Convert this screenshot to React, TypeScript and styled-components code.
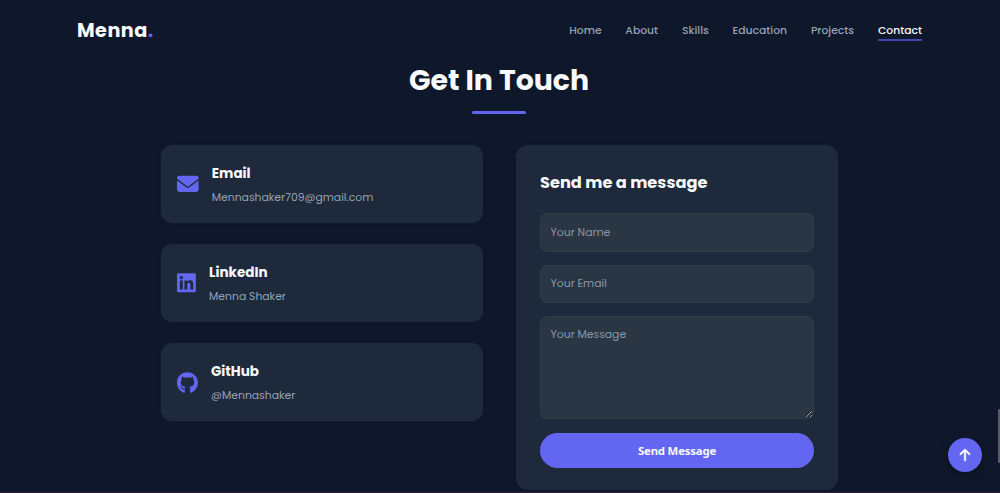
import React from "react";
import styled, { createGlobalStyle } from "styled-components";
import { FaArrowUp, FaEnvelope } from "react-icons/fa6";
import { FaGithub, FaLinkedin } from "react-icons/fa";

const GlobalStyle = createGlobalStyle`
  * { box-sizing: border-box; margin: 0; padding: 0; }
  body {
    background: #0f172a;
    color: #f8fafc;
    font-family: Poppins, Inter, "Liberation Sans", sans-serif;
    overflow: hidden;
  }
`;

const Page = styled.div`
  height: 493px;
  overflow: hidden;
  border-bottom: 1px solid #35202f;
`;

const Header = styled.header`
  display: flex;
  align-items: center;
  justify-content: space-between;
  height: 60px;
  padding: 0 78px 0 77px;
`;

const Logo = styled.span`
  padding-top: 1px;
  font-size: 19.2px;
  font-weight: 700;
  line-height: 28px;
  letter-spacing: 0.5px;
`;

const Dot = styled.span`
  color: #6366f1;
`;

const Nav = styled.nav`
  display: flex;
  gap: 23.8px;
`;

const NavLink = styled.a<{ $active?: boolean }>`
  height: 21px;
  margin-top: 1px;
  white-space: nowrap;
  font-size: 10.8px;
  font-weight: 500;
  line-height: 22px;
  color: ${({ $active }) => ($active ? "#f8fafc" : "#94a3b8")};
  border-bottom: 2px solid ${({ $active }) => ($active ? "#4644b0" : "transparent")};
`;

const Heading = styled.div`
  display: flex;
  flex-direction: column;
  align-items: center;
  height: 85px;
  padding-right: 2px;
`;

const Title = styled.h2`
  font-size: 28.35px;
  font-weight: 700;
  line-height: 40px;
`;

const Underline = styled.div`
  width: 54px;
  height: 3px;
  margin-top: 11px;
  border-radius: 2px;
  background: #6366f1;
`;

const Columns = styled.main`
  display: grid;
  grid-template-columns: 322px 322px;
  gap: 33.5px;
  padding-left: 160.5px;
  align-items: start;
`;

const Contacts = styled.div`
  display: flex;
  flex-direction: column;
  gap: 20.8px;
`;

const Card = styled.article<{ $iconWidth: number }>`
  display: flex;
  align-items: center;
  gap: 12.8px;
  height: 78.3px;
  padding: 0 16.9px;
  border-radius: 11px;
  background: #1e293b;
  box-shadow: 0 0 3px rgba(30, 41, 59, 0.35);
  svg {
    flex: none;
    height: 21.6px;
    width: ${({ $iconWidth }) => $iconWidth}px;
    color: #6366f1;
  }
`;

const CardTitle = styled.h3`
  padding-top: 4px;
  font-size: 13.5px;
  font-weight: 700;
  line-height: 22px;
`;

const CardText = styled.p`
  margin-top: 2px;
  font-size: 10.8px;
  line-height: 22px;
  color: #94a3b8;
`;

const Form = styled.form`
  display: flex;
  flex-direction: column;
  height: 345px;
  padding: 24px 24px 0;
  border-radius: 12px;
  background: #1e293b;
  box-shadow: 0 0 3px rgba(30, 41, 59, 0.35);
`;

const FormTitle = styled.h3`
  margin-bottom: 17px;
  font-size: 16.2px;
  font-weight: 700;
  line-height: 27px;
`;

const fieldStyle = `
  display: block;
  width: 100%;
  border: 1px solid #303d4d;
  border-radius: 7px;
  background: #2b3645;
  color: #f8fafc;
  font-family: inherit;
  font-size: 10.8px;
  outline: none;
  &::placeholder { color: #8c97a5; opacity: 1; }
`;

const Input = styled.input`
  ${fieldStyle}
  height: 38.5px;
  margin-bottom: 13px;
  padding: 1px 9.5px 0;
`;

const TextArea = styled.textarea`
  ${fieldStyle}
  height: 103px;
  margin-bottom: 14px;
  padding: 8px 9.5px;
  line-height: 20px;
  resize: vertical;
`;

const SubmitButton = styled.button`
  height: 34.5px;
  padding-top: 1px;
  border: 0;
  border-radius: 18px;
  background: #6366f1;
  color: #f8fafc;
  font: 700 11.4px/34px "Noto Sans", sans-serif;
  letter-spacing: -0.2px;
`;

const TopButton = styled.button`
  position: fixed;
  right: 18px;
  bottom: 21px;
  display: grid;
  place-items: center;
  width: 34px;
  height: 34px;
  border: 0;
  border-radius: 50%;
  background: #6366f1;
  color: #f8fafc;
  box-shadow: 0 3px 10px rgba(0, 0, 0, 0.25);
  svg { width: 14px; height: 14px; stroke: currentColor; stroke-width: 14px; }
`;

const ScrollThumb = styled.div`
  position: fixed;
  right: 0;
  top: 409px;
  width: 2px;
  height: 54px;
  border-radius: 1px 0 0 1px;
  background: #555c68;
`;

const links = ["Home", "About", "Skills", "Education", "Projects", "Contact"];

const contacts = [
  { title: "Email", text: "Mennashaker709@gmail.com", icon: <FaEnvelope />, iconWidth: 21.6 },
  { title: "LinkedIn", text: "Menna Shaker", icon: <FaLinkedin />, iconWidth: 18.9 },
  { title: "GitHub", text: "@Mennashaker", icon: <FaGithub />, iconWidth: 20.9 },
];

export default function App() {
  return (
    <>
      <GlobalStyle />
      <Page>
        <Header>
          <Logo>Menna<Dot>.</Dot></Logo>
          <Nav>
            {links.map((label) => (
              <NavLink key={label} $active={label === "Contact"}>{label}</NavLink>
            ))}
          </Nav>
        </Header>
        <Heading>
          <Title>Get In Touch</Title>
          <Underline />
        </Heading>
        <Columns>
          <Contacts>
            {contacts.map((c) => (
              <Card key={c.title} $iconWidth={c.iconWidth}>
                {c.icon}
                <div>
                  <CardTitle>{c.title}</CardTitle>
                  <CardText>{c.text}</CardText>
                </div>
              </Card>
            ))}
          </Contacts>
          <Form>
            <FormTitle>Send me a message</FormTitle>
            <Input placeholder="Your Name" />
            <Input placeholder="Your Email" />
            <TextArea placeholder="Your Message" />
            <SubmitButton type="button">Send Message</SubmitButton>
          </Form>
        </Columns>
      </Page>
      <TopButton aria-label="Back to top"><FaArrowUp /></TopButton>
      <ScrollThumb />
    </>
  );
}
